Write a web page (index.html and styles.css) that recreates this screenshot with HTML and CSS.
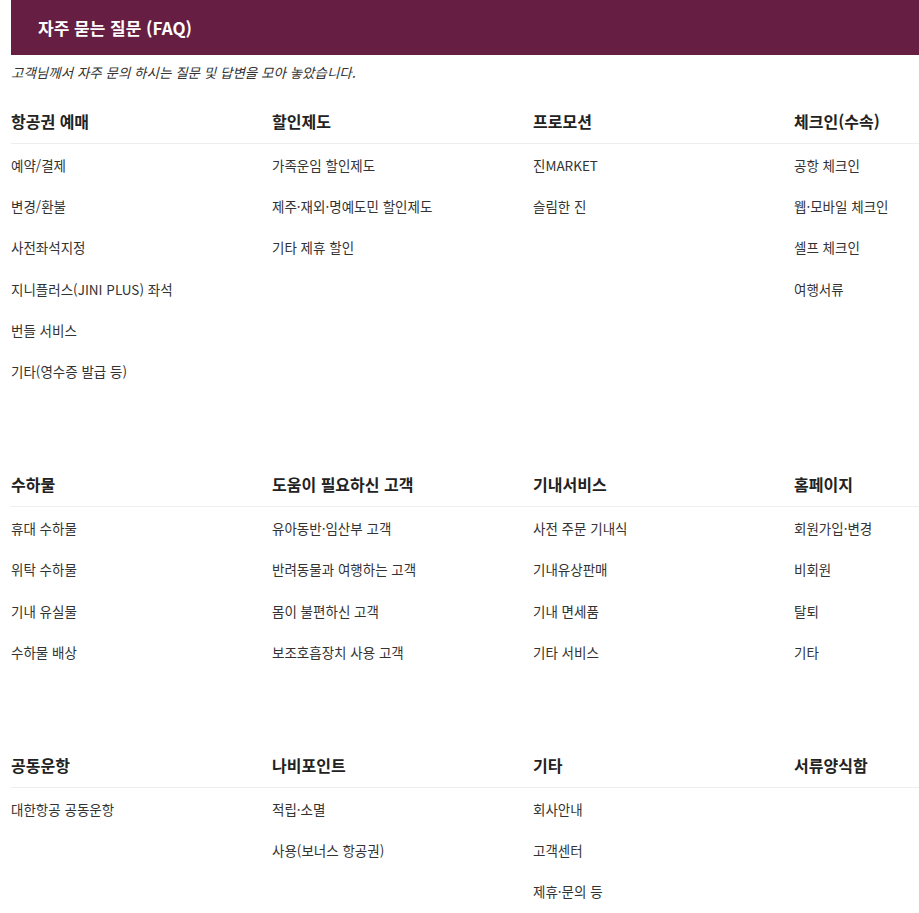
FILE: index.html
```html
<!DOCTYPE html>
<html lang="ko">
<head>
<meta charset="utf-8">
<title>자주 묻는 질문 (FAQ)</title>
<link rel="stylesheet" href="styles.css">
</head>
<body>
<div class="page">
  <div class="title-bar"><h1 class="title">자주 묻는 질문 (FAQ)</h1></div>
  <p class="intro">고객님께서 자주 문의 하시는 질문 및 답변을 모아 놓았습니다.</p>

  <div class="group">
    <div class="col">
      <h2 class="col-title">항공권 예매</h2>
      <ul class="links">
        <li>예약/결제</li>
        <li>변경/환불</li>
        <li>사전좌석지정</li>
        <li>지니플러스(JINI PLUS) 좌석</li>
        <li>번들 서비스</li>
        <li>기타(영수증 발급 등)</li>
      </ul>
    </div>
    <div class="col">
      <h2 class="col-title">할인제도</h2>
      <ul class="links">
        <li>가족운임 할인제도</li>
        <li>제주·재외·명예도민 할인제도</li>
        <li>기타 제휴 할인</li>
      </ul>
    </div>
    <div class="col">
      <h2 class="col-title">프로모션</h2>
      <ul class="links">
        <li>진MARKET</li>
        <li>슬림한 진</li>
      </ul>
    </div>
    <div class="col">
      <h2 class="col-title">체크인(수속)</h2>
      <ul class="links">
        <li>공항 체크인</li>
        <li>웹·모바일 체크인</li>
        <li>셀프 체크인</li>
        <li>여행서류</li>
      </ul>
    </div>
  </div>

  <div class="group">
    <div class="col">
      <h2 class="col-title">수하물</h2>
      <ul class="links">
        <li>휴대 수하물</li>
        <li>위탁 수하물</li>
        <li>기내 유실물</li>
        <li>수하물 배상</li>
      </ul>
    </div>
    <div class="col">
      <h2 class="col-title">도움이 필요하신 고객</h2>
      <ul class="links">
        <li>유아동반·임산부 고객</li>
        <li>반려동물과 여행하는 고객</li>
        <li>몸이 불편하신 고객</li>
        <li>보조호흡장치 사용 고객</li>
      </ul>
    </div>
    <div class="col">
      <h2 class="col-title">기내서비스</h2>
      <ul class="links">
        <li>사전 주문 기내식</li>
        <li>기내유상판매</li>
        <li>기내 면세품</li>
        <li>기타 서비스</li>
      </ul>
    </div>
    <div class="col">
      <h2 class="col-title">홈페이지</h2>
      <ul class="links">
        <li>회원가입·변경</li>
        <li>비회원</li>
        <li>탈퇴</li>
        <li>기타</li>
      </ul>
    </div>
  </div>

  <div class="group">
    <div class="col">
      <h2 class="col-title">공동운항</h2>
      <ul class="links">
        <li>대한항공 공동운항</li>
      </ul>
    </div>
    <div class="col">
      <h2 class="col-title">나비포인트</h2>
      <ul class="links">
        <li>적립·소멸</li>
        <li>사용(보너스 항공권)</li>
      </ul>
    </div>
    <div class="col">
      <h2 class="col-title">기타</h2>
      <ul class="links">
        <li>회사안내</li>
        <li>고객센터</li>
        <li>제휴·문의 등</li>
      </ul>
    </div>
    <div class="col">
      <h2 class="col-title">서류양식함</h2>
      <ul class="links"></ul>
    </div>
  </div>
</div>
</body>
</html>
```

FILE: styles.css
```css
html, body {
  margin: 0;
  padding: 0;
  background: #fff;
  overflow: hidden;
}
body {
  font-family: "Noto Sans CJK KR", "Noto Sans", sans-serif;
  color: #333;
}
.page {
  margin-left: 11px;
  width: 1044px;
}
.title-bar {
  background: #661e42;
  height: 55px;
  display: flex;
  align-items: center;
  padding-left: 27px;
  box-sizing: border-box;
}
.title {
  margin: 0;
  color: #fff;
  font-size: 17px;
  font-weight: 700;
  line-height: 20px;
}
.intro {
  margin: 8px 0 29px;
  font-size: 13.5px;
  line-height: 18px;
  font-style: italic;
  color: #333;
}
.group {
  display: grid;
  grid-template-columns: repeat(4, 261px);
  margin-bottom: 71px;
}
.col-title {
  margin: 0;
  font-size: 16px;
  font-weight: 700;
  line-height: 22px;
  color: #222;
  padding-bottom: 11px;
  border-bottom: 1px solid #eee;
}
.links {
  list-style: none;
  margin: 0;
  padding: 11px 0 0;
}
.links li {
  font-size: 13.5px;
  line-height: 20px;
  margin-bottom: 21.2px;
  color: #333;
}
```
